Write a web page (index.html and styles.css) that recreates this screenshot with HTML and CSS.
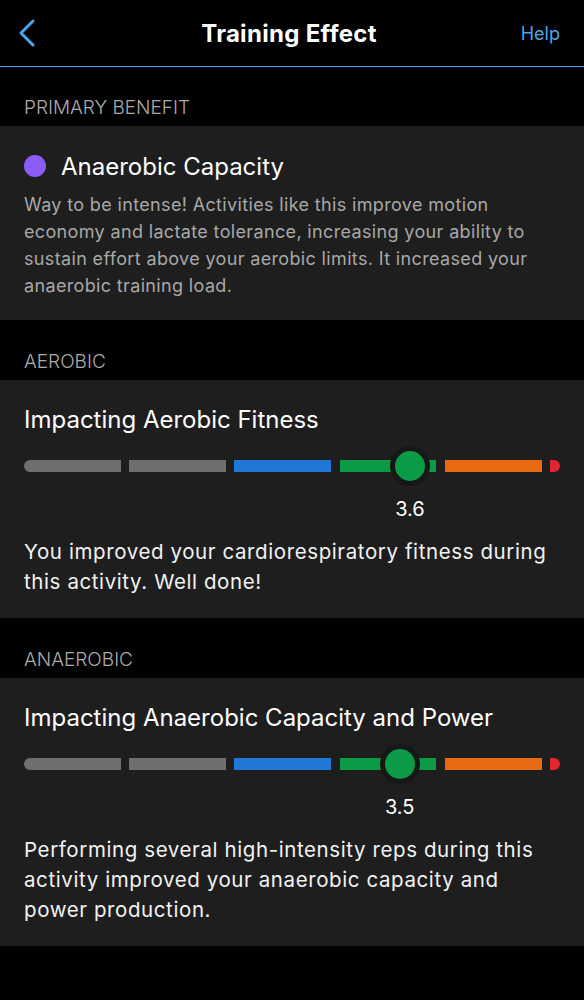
FILE: index.html
```html
<!DOCTYPE html>
<html>
<head>
    <meta charset="utf-8">
    <title>Training Effect</title>
    <meta name="viewport" content="width=device-width, initial-scale=1">
    <link rel="stylesheet" href="styles.css">
</head>
<body>
    <header class="topbar">
        <a class="back" href="#">
            <svg width="20" height="30" viewBox="0 0 20 30">
                <polyline points="15,3 3,15 15,27" fill="none" stroke="#4aa5ea" stroke-width="3" stroke-linecap="round" stroke-linejoin="round"/>
            </svg>
        </a>
        <h1 class="title">Training Effect</h1>
        <a class="help" href="#">Help</a>
    </header>

    <div class="label">PRIMARY BENEFIT</div>
    <section class="card">
        <div class="benefit">
            <span class="dot"></span>
            <span class="benefit-name">Anaerobic Capacity</span>
        </div>
        <p class="note">Way to be intense! Activities like this improve motion economy and lactate tolerance, increasing your ability to sustain effort above your aerobic limits. It increased your anaerobic training load.</p>
    </section>

    <div class="label">AEROBIC</div>
    <section class="card">
        <div class="card-title">Impacting Aerobic Fitness</div>
        <div class="scale">
            <div class="track">
                <span class="seg grey first"></span>
                <span class="seg grey"></span>
                <span class="seg blue"></span>
                <span class="seg green"></span>
                <span class="seg orange"></span>
                <span class="seg red"></span>
                <span class="knob" style="left: 72%"></span>
            </div>
            <div class="value-row"><span class="value" style="left: 72%">3.6</span></div>
        </div>
        <p class="text">You improved your cardiorespiratory fitness during this activity. Well done!</p>
    </section>

    <div class="label">ANAEROBIC</div>
    <section class="card">
        <div class="card-title">Impacting Anaerobic Capacity and Power</div>
        <div class="scale">
            <div class="track">
                <span class="seg grey first"></span>
                <span class="seg grey"></span>
                <span class="seg blue"></span>
                <span class="seg green"></span>
                <span class="seg orange"></span>
                <span class="seg red"></span>
                <span class="knob" style="left: 70.1%"></span>
            </div>
            <div class="value-row"><span class="value" style="left: 70.1%">3.5</span></div>
        </div>
        <p class="text">Performing several high-intensity reps during this activity improved your anaerobic capacity and power production.</p>
    </section>
</body>
</html>
```

FILE: styles.css
```css
* {
    box-sizing: border-box;
}
body {
    margin: 0;
    background: #000;
    color: #fff;
    font-family: Inter, "Liberation Sans", sans-serif;
}
a {
    text-decoration: none;
}
.topbar {
    height: 67px;
    display: flex;
    align-items: center;
    justify-content: space-between;
    padding: 0 24px 0 18px;
    border-bottom: 1.5px solid #4aa5ea;
}
.back {
    display: flex;
    width: 60px;
}
.title {
    margin: 0;
    font-size: 24px;
    font-weight: 700;
    letter-spacing: 0.3px;
}
.help {
    width: 60px;
    text-align: right;
    color: #4aa5ea;
    font-size: 18px;
}
.label {
    padding: 31px 24px 8px;
    font-size: 19px;
    line-height: 20px;
    color: #ababab;
    font-weight: 300;
}
.card {
    background: #1e1e1e;
    padding: 24px 24px 21px;
}
.card + .label {
    padding-top: 32px;
}
.benefit {
    display: flex;
    align-items: center;
    height: 32px;
}
.dot {
    width: 22px;
    height: 22px;
    border-radius: 50%;
    background: #8b5cf6;
    margin-right: 15px;
}
.benefit-name {
    font-size: 24px;
}
.note {
    margin: 9px 0 0;
    font-size: 18px;
    line-height: 27px;
    letter-spacing: 0.35px;
    color: #a8a8a8;
}
.card-title {
    font-size: 24px;
    line-height: 32px;
}
.scale {
    margin-top: 14px;
}
.track {
    position: relative;
    height: 32px;
    display: flex;
    align-items: center;
    gap: 8.5px;
}
.seg {
    flex: 1;
    height: 12px;
}
.seg.first {
    border-radius: 6px 0 0 6px;
}
.grey { background: #6f6f6f; }
.blue { background: #1f78d6; }
.green { background: #0b9a46; }
.orange { background: #e8690f; }
.red {
    flex: 0 0 10px;
    background: #e0262e;
    border-radius: 0 6px 6px 0;
}
.knob {
    position: absolute;
    top: -4px;
    width: 40px;
    height: 40px;
    margin-left: -20px;
    border-radius: 50%;
    background: #0b9a46;
    border: 5px solid #171717;
}
.value-row {
    position: relative;
    height: 24px;
    margin-top: 15px;
}
.value {
    position: absolute;
    transform: translateX(-50%);
    font-size: 20px;
    line-height: 24px;
}
.text {
    margin: 16px 0 0;
    font-size: 20.5px;
    line-height: 30px;
    letter-spacing: 0.6px;
    color: #f2f2f2;
}
```
